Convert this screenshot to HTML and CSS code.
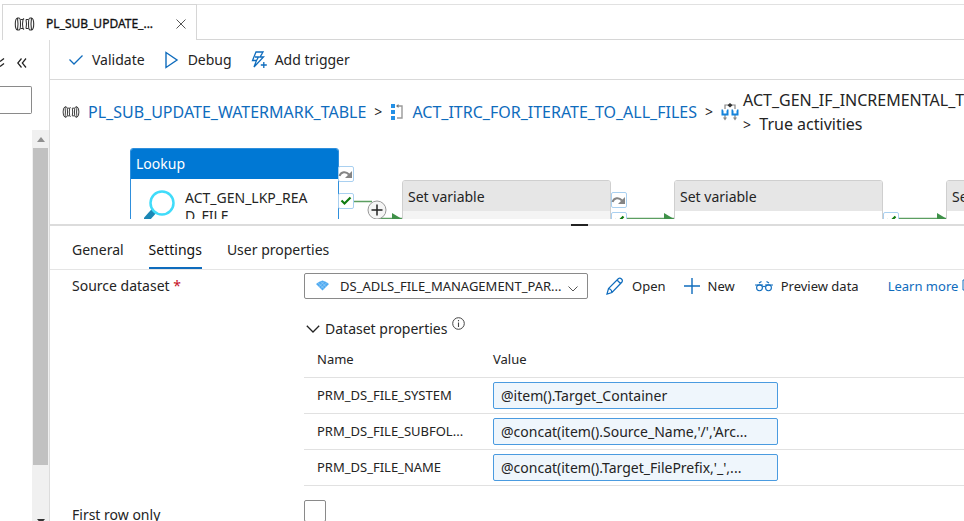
FILE: index.html
```html
<!DOCTYPE html>
<html lang="en">
<head>
<meta charset="utf-8">
<title>PL_SUB_UPDATE_WATERMARK_TABLE</title>
<link rel="stylesheet" href="styles.css">
</head>
<body>
<svg class="defs" aria-hidden="true">
  <symbol id="pipeline" viewBox="0 0 20 14">
    <g fill="none" stroke="#333" stroke-width="1.1">
      <path d="M3 1H4.500Q6 1 6 7T4.500 13H3Q.8 12.500.8 7T3 1ZM3 1Q4 7 3 13"/>
      <path d="M6 2.500H8.500Q7.500 7 8.500 11.500H6M11.500 2.500H14M11.500 11.500H14M8.500 2.500L9.500 1.500M8.500 11.500L9.500 12.500M11.500 2.500Q12.500 7 11.500 11.500"/>
      <path d="M17 1H15.500Q14 1 14 7T15.500 13H17Q19.200 12.500 19.200 7T17 1ZM17 1Q16 7 17 13"/>
    </g>
  </symbol>
  <symbol id="skip" viewBox="0 0 16 16">
    <rect x=".5" y=".5" width="15" height="15" rx="1.5" fill="#fff" stroke="#a9d0f0"/>
    <path d="M1.5 10C3 5.5 8 5 11 8.5" fill="none" stroke="#858585" stroke-width="2"/><path d="M14 5V12H7Z" fill="#858585"/>
  </symbol>
  <symbol id="success" viewBox="0 0 16 16">
    <rect x=".5" y=".5" width="15" height="15" rx="1.5" fill="#fff" stroke="#a9d0f0"/>
    <path d="M3.5 7.5L6.5 10.5L12.5 4.5" fill="none" stroke="#107c10" stroke-width="2.2"/>
  </symbol>
</svg>
<div class="app">
  <header class="tabbar">
    <div class="file-tab">
      <svg class="tab-icon"><use href="#pipeline"/></svg>
      <span class="file-name">PL_SUB_UPDATE_...</span>
      <button class="plain" aria-label="Close tab"><svg width="10" height="10" viewBox="0 0 10 10"><path d="M.5.5L9.5 9.5M9.5.5L.5 9.5" stroke="#555" fill="none"/></svg></button>
    </div>
  </header>
  <div class="workspace">
    <aside class="sidebar">
      <div class="side-actions">
        <button class="plain" aria-label="Expand all"><svg width="5" height="12" viewBox="0 0 5 12"><path d="M0 4.5L4 1.5M0 9.5L4 6.5" fill="none" stroke="#222" stroke-width="1.4"/></svg></button>
        <button class="plain" aria-label="Collapse panel"><svg width="10" height="10" viewBox="0 0 10 10"><path d="M4.5.5L.8 5L4.5 9.5M9 .5L5.3 5L9 9.5" fill="none" stroke="#222" stroke-width="1.2"/></svg></button>
      </div>
      <input class="filter" type="text" aria-label="Filter resources">
      <div class="scroll-track">
        <svg class="scroll-arrow" viewBox="0 0 8 5"><path d="M4 0L8 5H0Z" fill="#8f8f8f"/></svg>
        <div class="scroll-thumb"></div>
        <svg class="scroll-down" viewBox="0 0 8 5"><path d="M0 0H8L4 5Z" fill="#333"/></svg>
      </div>
    </aside>
    <main class="main">
      <div class="toolbar">
        <button class="command"><svg width="16" height="16" viewBox="0 0 16 16"><path d="M1.5 7.5L6 12L14.5 3.5" fill="none" stroke="#0f6cbd" stroke-width="1.3"/></svg>Validate</button>
        <button class="command"><svg width="16" height="18" viewBox="0 0 16 18"><path d="M2 1.5L13 9L2 16.5Z" fill="none" stroke="#0f6cbd" stroke-width="1.4"/></svg>Debug</button>
        <button class="command"><svg width="16" height="18" viewBox="0 0 16 18"><path d="M5 1H12L9 6H12.5L3 16L5.5 9.5H1.5ZM5.5 9.5L7.5 6H4M9 6L11 3M12.8 11V17M9.8 14H15.8" fill="none" stroke="#0f6cbd" stroke-width="1.3"/></svg>Add trigger</button>
      </div>
      <nav class="breadcrumb" aria-label="Breadcrumb">
        <svg class="crumb-pipe"><use href="#pipeline"/></svg>
        <a href="#pipe">PL_SUB_UPDATE_WATERMARK_TABLE</a>
        <span class="sep">&gt;</span>
        <svg width="14" height="16" viewBox="0 0 14 16"><path d="M1 0H5V4H1ZM1 6H5V10H1ZM1 12H5V16H1Z" fill="#2490e6"/><path d="M7 2H12V14H7" fill="none" stroke="#999" stroke-width="1.4"/><path d="M8.5 0V4L6 2Z" fill="#777"/></svg>
        <a href="#iterate">ACT_ITRC_FOR_ITERATE_TO_ALL_FILES</a>
        <span class="sep">&gt;</span>
        <svg class="branch" width="18" height="18" viewBox="0 0 18 18"><path d="M4 6V2H14V6M4 11V16M14 11V16" fill="none" stroke="#888" stroke-width="1.200"/><path d="M9 0L11.500 2.200L9 4.500L6.500 2.200Z" fill="#333"/><path d="M2 7.500H1.500V11.500H6.500V7.500H6M12 7.500H11.500V11.500H16.500V7.500H16" fill="none" stroke="#1684dc" stroke-width="2"/><path d="M2 14.500H6L4 17.500ZM12 14.500H16L14 17.500Z" fill="#888"/></svg>
        <span class="crumb-current">ACT_GEN_IF_INCREMENTAL_T<br><span class="sep">&gt;</span>&nbsp; True activities</span>
      </nav>
      <section class="canvas" aria-label="Pipeline canvas">
        <svg class="wires" width="914" height="84" viewBox="0 0 914 84">
          <path d="M304 63.500H322M330 80.500H352M576 80.500H624M848 80.500H897" stroke="#5b9e61" stroke-width="1.3" fill="none"/>
          <path d="M342 75L352 81H342ZM614 75L624 81H614ZM887 75L897 81H887Z" fill="#3f9149"/>
        </svg>
        <article class="node lookup"><h2>Lookup</h2><div class="node-body"><svg width="32" height="34" viewBox="0 0 32 34"><path d="M10 22L1 32" stroke="#1b87b5" stroke-width="6"/><circle cx="18" cy="14" r="11.500" fill="#fff" stroke="#40dcfa" stroke-width="2.500"/></svg><p>ACT_GEN_LKP_REA<br>D_FILE</p></div></article>
        <article class="node first"><h2>Set variable</h2></article>
        <article class="node second"><h2>Set variable</h2></article>
        <article class="node third"><h2>Set variable</h2></article>
        <svg class="port skip-a"><use href="#skip"/></svg>
        <svg class="port ok-a"><use href="#success"/></svg>
        <svg class="port skip-b"><use href="#skip"/></svg>
        <svg class="port ok-b"><use href="#success"/></svg>
        <svg class="port ok-c"><use href="#success"/></svg>
        <svg class="add" viewBox="0 0 20 20"><circle cx="10" cy="10" r="9" fill="#f5f5f5" stroke="#999"/><path d="M10 4.500V15.500M4.500 10H15.500" stroke="#222" stroke-width="1.500"/></svg>
      </section>
      <div class="splitter"><span></span></div>
      <section class="properties">
        <div class="tabs" role="tablist">
          <button role="tab">General</button><button role="tab" class="active" aria-selected="true">Settings</button><button role="tab">User properties</button>
        </div>
        <div class="field dataset-row">
          <label for="dataset">Source dataset <span class="required">*</span></label>
          <div class="source-controls">
            <div class="select-wrap">
              <svg class="gem" viewBox="0 0 14 11"><path d="M3.500 1.500L7 0L10.500 1.500L14 4L7 11L0 4Z" fill="#50aaf0"/><path d="M2 2.500L9 9M5 1L11 7M9 1L3 7M12 2L5 9" stroke="#9ed2fa" stroke-width=".7"/></svg>
              <select id="dataset"><option>DS_ADLS_FILE_MANAGEMENT_PAR...</option></select>
              <svg class="chevron" viewBox="0 0 10 6"><path d="M.5.5L5 5L9.500.5" fill="none" stroke="#555"/></svg>
            </div>
            <button class="action open"><svg width="18" height="18" viewBox="0 0 18 18"><path d="M1 17L2.500 11.500L12.500 1.500Q14 .5 15.500 2T16 5L6 15.500ZM11 3L15 7M2.500 11.500Q5.500 12 6 15.500" fill="none" stroke="#0f6cbd" stroke-width="1.200"/></svg>Open</button>
            <button class="action new"><svg width="16" height="16" viewBox="0 0 16 16"><path d="M8 0V16M0 8H16" stroke="#0f6cbd" stroke-width="1.400"/></svg>New</button>
            <button class="action preview"><svg width="18" height="12" viewBox="0 0 18 12"><g fill="none" stroke="#0f6cbd" stroke-width="1.100"><circle cx="4.500" cy="7.800" r="2.900"/><circle cx="13.500" cy="7.800" r="2.900"/><path d="M7.500 7Q9 5.500 10.500 7M0 5H8M10 5H18M4 3L6.500 1.500M14 3L11.500 1.500"/></g></svg>Preview data</button>
            <a class="learn" href="#learn">Learn more <svg width="10" height="12" viewBox="0 0 10 12"><path d="M5 1H1V11H9V7" fill="none" stroke="#0f6cbd"/></svg></a>
          </div>
        </div>
        <div class="dataset-properties">
          <h3><svg width="14" height="8" viewBox="0 0 14 8"><path d="M.8.8L7 7L13.200.8" fill="none" stroke="#222" stroke-width="1.300"/></svg>Dataset properties<svg class="info" viewBox="0 0 13 13"><circle cx="6.500" cy="6.500" r="5.800" fill="none" stroke="#444"/><path d="M6.500 5.500V10M6.500 3V4.300" stroke="#444" stroke-width="1.100"/></svg></h3>
          <table>
            <thead><tr><th class="name">Name</th><th>Value</th></tr></thead>
            <tbody>
              <tr><td><label for="p1">PRM_DS_FILE_SYSTEM</label></td><td><input id="p1" type="text" value="@item().Target_Container"></td></tr>
              <tr><td><label for="p2">PRM_DS_FILE_SUBFOL...</label></td><td><input id="p2" type="text" value="@concat(item().Source_Name,'/','Arc..."></td></tr>
              <tr><td><label for="p3">PRM_DS_FILE_NAME</label></td><td><input id="p3" type="text" value="@concat(item().Target_FilePrefix,'_',..."></td></tr>
            </tbody>
          </table>
        </div>
        <div class="field first-row"><label for="first-row">First row only</label><input id="first-row" type="checkbox"></div>
      </section>
    </main>
  </div>
</div>
</body>
</html>
```
FILE: styles.css
```css
* { box-sizing: border-box; }
body { margin: 0; overflow: hidden; background: #fff; color: #242424; font: 14px/20px "Noto Sans", "Open Sans", sans-serif; }
button, input, select { font: inherit; color: inherit; }
button { border: 0; padding: 0; background: none; }
a { color: #0f6cbd; text-decoration: none; }
svg { flex: none; }
h2, h3, p { margin: 0; font-weight: 400; }
.defs { display: none; }
.app { height: 100vh; display: flex; flex-direction: column; overflow: hidden; }
.plain { display: flex; }

.tabbar { flex: none; height: 40px; padding: 4px 0 0 2px; display: flex; }
.tabbar::after { content: ""; flex: 1; border-top: 1px solid #e1e1e1; border-bottom: 1px solid #d6d6d6; }
.file-tab { width: 195px; display: flex; align-items: center; padding: 2px 10px 0 11px; border: 1px solid #d6d6d6; border-bottom: 0; }
.tab-icon { width: 21px; height: 14px; }
.file-name { margin-left: 11px; flex: 1; font-size: 12px; white-space: nowrap; color: #111; -webkit-text-stroke: .3px; }

.workspace { flex: 1; min-height: 0; display: flex; }
.sidebar { flex: none; width: 50px; border-right: 1px solid #dcdcdc; display: flex; flex-direction: column; }
.side-actions { height: 46px; display: flex; align-items: center; gap: 12px; }
.filter { width: 32px; height: 28px; border: 1px solid #8a8a8a; border-left: 0; border-radius: 0 2px 2px 0; padding: 0; }
.scroll-track { margin: 16px 0 0 32px; width: 17px; flex: 1; display: flex; flex-direction: column; align-items: center; background: #f0f0f0; }
.scroll-arrow { width: 8px; height: 5px; margin: 7px 0 6px; }
.scroll-thumb { width: 15px; flex: 0 1 317px; background: #c1c1c1; }
.scroll-down { width: 8px; height: 5px; margin-top: auto; margin-bottom: -3px; }

.main { flex: 1; min-width: 0; display: flex; flex-direction: column; }
.toolbar { flex: none; height: 40px; padding: 1px 18px 0; display: flex; align-items: center; gap: 19px; border-bottom: 1px solid #d9d9d9; }
.command { display: flex; align-items: center; gap: 8px; }
.breadcrumb { flex: none; height: 58px; padding: 6px 0 0 12px; display: flex; align-items: center; gap: 8px; font-size: 16px; line-height: 24px; white-space: nowrap; }
.breadcrumb .sep { font-size: 14px; }
.breadcrumb .branch { margin-right: -4px; }
.crumb-pipe { width: 18px; height: 12px; }

.canvas { flex: none; position: relative; height: 81px; overflow: hidden; }
.wires { position: absolute; left: 0; top: 0; }
.node { position: absolute; top: 42px; width: 209px; height: 110px; border: 1px solid #cfcfcf; border-radius: 3px; background: #fff; overflow: hidden; }
.node h2 { height: 30px; padding: 0 5px; line-height: 32px; font-size: 14px; background: #e6e6e6; }
.node.lookup { left: 80px; top: 10px; border-color: #2f8fdc; }
.node.lookup h2 { background: #0078d4; color: #fff; line-height: 30px; }
.node-body { display: flex; padding: 10px 13px; gap: 9px; line-height: 18px; }
.node.first { left: 352px; background: #f4f4f4; }
.node.second { left: 624px; }
.node.third { left: 896px; }
.port { position: absolute; width: 16px; height: 16px; }
.skip-a { left: 288px; top: 28px; }
.ok-a { left: 288px; top: 55px; }
.skip-b { left: 561px; top: 54px; }
.ok-b { left: 561px; top: 74px; }
.ok-c { left: 833px; top: 74px; }
.add { position: absolute; left: 317px; top: 62px; width: 20px; height: 20px; }
.splitter { flex: none; height: 7px; padding: 5px 0 0 57%; background: linear-gradient(#dcdcdc, #dcdcdc) 0 5px / 100% 2px no-repeat; }
.splitter span { display: block; width: 17px; height: 2px; background: #222; }

.properties { flex: 1; min-height: 0; }
.tabs { height: 44px; padding: 7px 22px 0; display: flex; gap: 25px; border-bottom: 1px solid #e5e5e5; }
.tabs button { border-bottom: 2px solid transparent; }
.tabs .active { border-color: #0f6cbd; color: #111; }
.field { display: grid; grid-template-columns: 232px 1fr; padding-left: 22px; }
.dataset-row { padding-top: 3px; align-items: center; }
.required { color: #c50f1f; }
.source-controls { display: flex; align-items: center; white-space: nowrap; min-width: 0; font-size: 13px; }
.select-wrap { flex: none; position: relative; width: 284px; height: 26px; }
.select-wrap select { width: 100%; height: 100%; appearance: none; border: 1px solid #8a8a8a; border-radius: 2px; background: #fff; padding: 0 8px 0 35px; }
.gem { position: absolute; left: 12px; top: 7px; width: 13px; height: 11px; }
.chevron { position: absolute; right: 10px; top: 13px; width: 10px; height: 6px; }
.action { display: flex; align-items: center; gap: 8px; margin-left: 18px; }
.preview { margin-left: 20px; }
.learn { margin-left: 29px; }
.dataset-properties { margin-left: 254px; }
h3 { display: flex; align-items: center; gap: 5px; padding: 18px 0 9px 2px; font-size: 14px; }
.info { width: 13px; height: 13px; margin-bottom: 10px; }
table { width: 100%; border-collapse: collapse; table-layout: fixed; font-size: 13px; }
th { text-align: left; font-weight: 400; height: 28px; padding: 0; vertical-align: top; }
th.name { width: 189px; }
tr > :first-child { padding-left: 13px; }
thead tr, tbody tr { border-bottom: 1px solid #e1e1e1; }
td { height: 36px; padding: 0; white-space: nowrap; }
td input { display: block; width: 285px; height: 27px; padding: 1px 7px 0; border: 1px solid #4a9be0; border-radius: 2px; background: #eff6fc; font-size: 14px; }
.first-row { padding-top: 14px; }
.first-row label { padding-top: 5px; }
.first-row input { appearance: none; margin: 0; width: 22px; height: 22px; border: 1px solid #8a8a8a; border-radius: 2px; background: #fff; }
```
